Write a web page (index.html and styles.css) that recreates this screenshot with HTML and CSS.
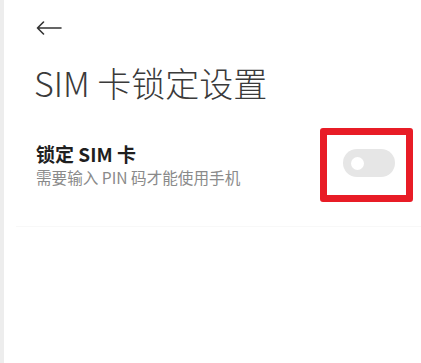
FILE: index.html
```html
<!DOCTYPE html>
<html lang="zh-CN">
<head>
<meta charset="utf-8">
<link rel="stylesheet" href="styles.css">
</head>
<body>
<div class="app">
  <div class="edge"></div>
  <main class="page">
    <header class="top">
      <svg class="back" width="26" height="14" viewBox="0 0 26 14" aria-label="返回">
        <path d="M1.5 7H25M7.5 1L1.5 7L7.5 13" fill="none" stroke="#333" stroke-width="1.6" stroke-linecap="round" stroke-linejoin="round"/>
      </svg>
    </header>
    <h1 class="title">SIM 卡锁定设置</h1>
    <section class="row">
      <div class="texts">
        <div class="row-title">锁定 SIM 卡</div>
        <div class="row-sub">需要输入 PIN 码才能使用手机</div>
      </div>
      <div class="mark">
        <div class="switch"><span class="knob"></span></div>
      </div>
    </section>
    <div class="sep"></div>
  </main>
</div>
</body>
</html>
```
FILE: styles.css
```css
html, body {
  margin: 0;
  padding: 0;
  background: #fff;
}
body {
  font-family: "Noto Sans CJK SC", "Noto Sans", sans-serif;
}
.app {
  display: flex;
  width: 421px;
  height: 363px;
  overflow: hidden;
}
.edge {
  width: 4px;
  flex: none;
  background: #ededed;
}
.page {
  flex: 1;
  display: flex;
  flex-direction: column;
}
.top {
  height: 56px;
  display: flex;
  align-items: center;
  padding-left: 32px;
}
.back {
  display: block;
}
.title {
  margin: 5px 0 0 0;
  padding-left: 30px;
  font-size: 34px;
  line-height: 44px;
  font-weight: 300;
  color: #3a3a3a;
}
.row {
  margin-top: 23px;
  display: flex;
  align-items: center;
  justify-content: space-between;
  padding-left: 32px;
  padding-right: 8px;
}
.row-title {
  font-size: 19px;
  line-height: 24px;
  font-weight: 700;
  color: #1f1f1f;
}
.row-sub {
  font-size: 15.6px;
  line-height: 22px;
  color: #8a8a8a;
}
.mark {
  width: 79px;
  height: 60px;
  border: 7px solid #e81c26;
  border-radius: 3px;
  display: flex;
  align-items: center;
  justify-content: center;
}
.switch {
  width: 52px;
  height: 28px;
  border-radius: 14px;
  background: #e6e6e6;
  display: flex;
  align-items: center;
  padding-left: 8px;
  box-sizing: border-box;
  margin-top: -4px;
  margin-left: 4px;
}
.knob {
  width: 13px;
  height: 13px;
  border-radius: 50%;
  background: #fff;
}
.sep {
  margin-top: 24px;
  margin-left: 12px;
  height: 1px;
  background: #f8f8f8;
}
```
